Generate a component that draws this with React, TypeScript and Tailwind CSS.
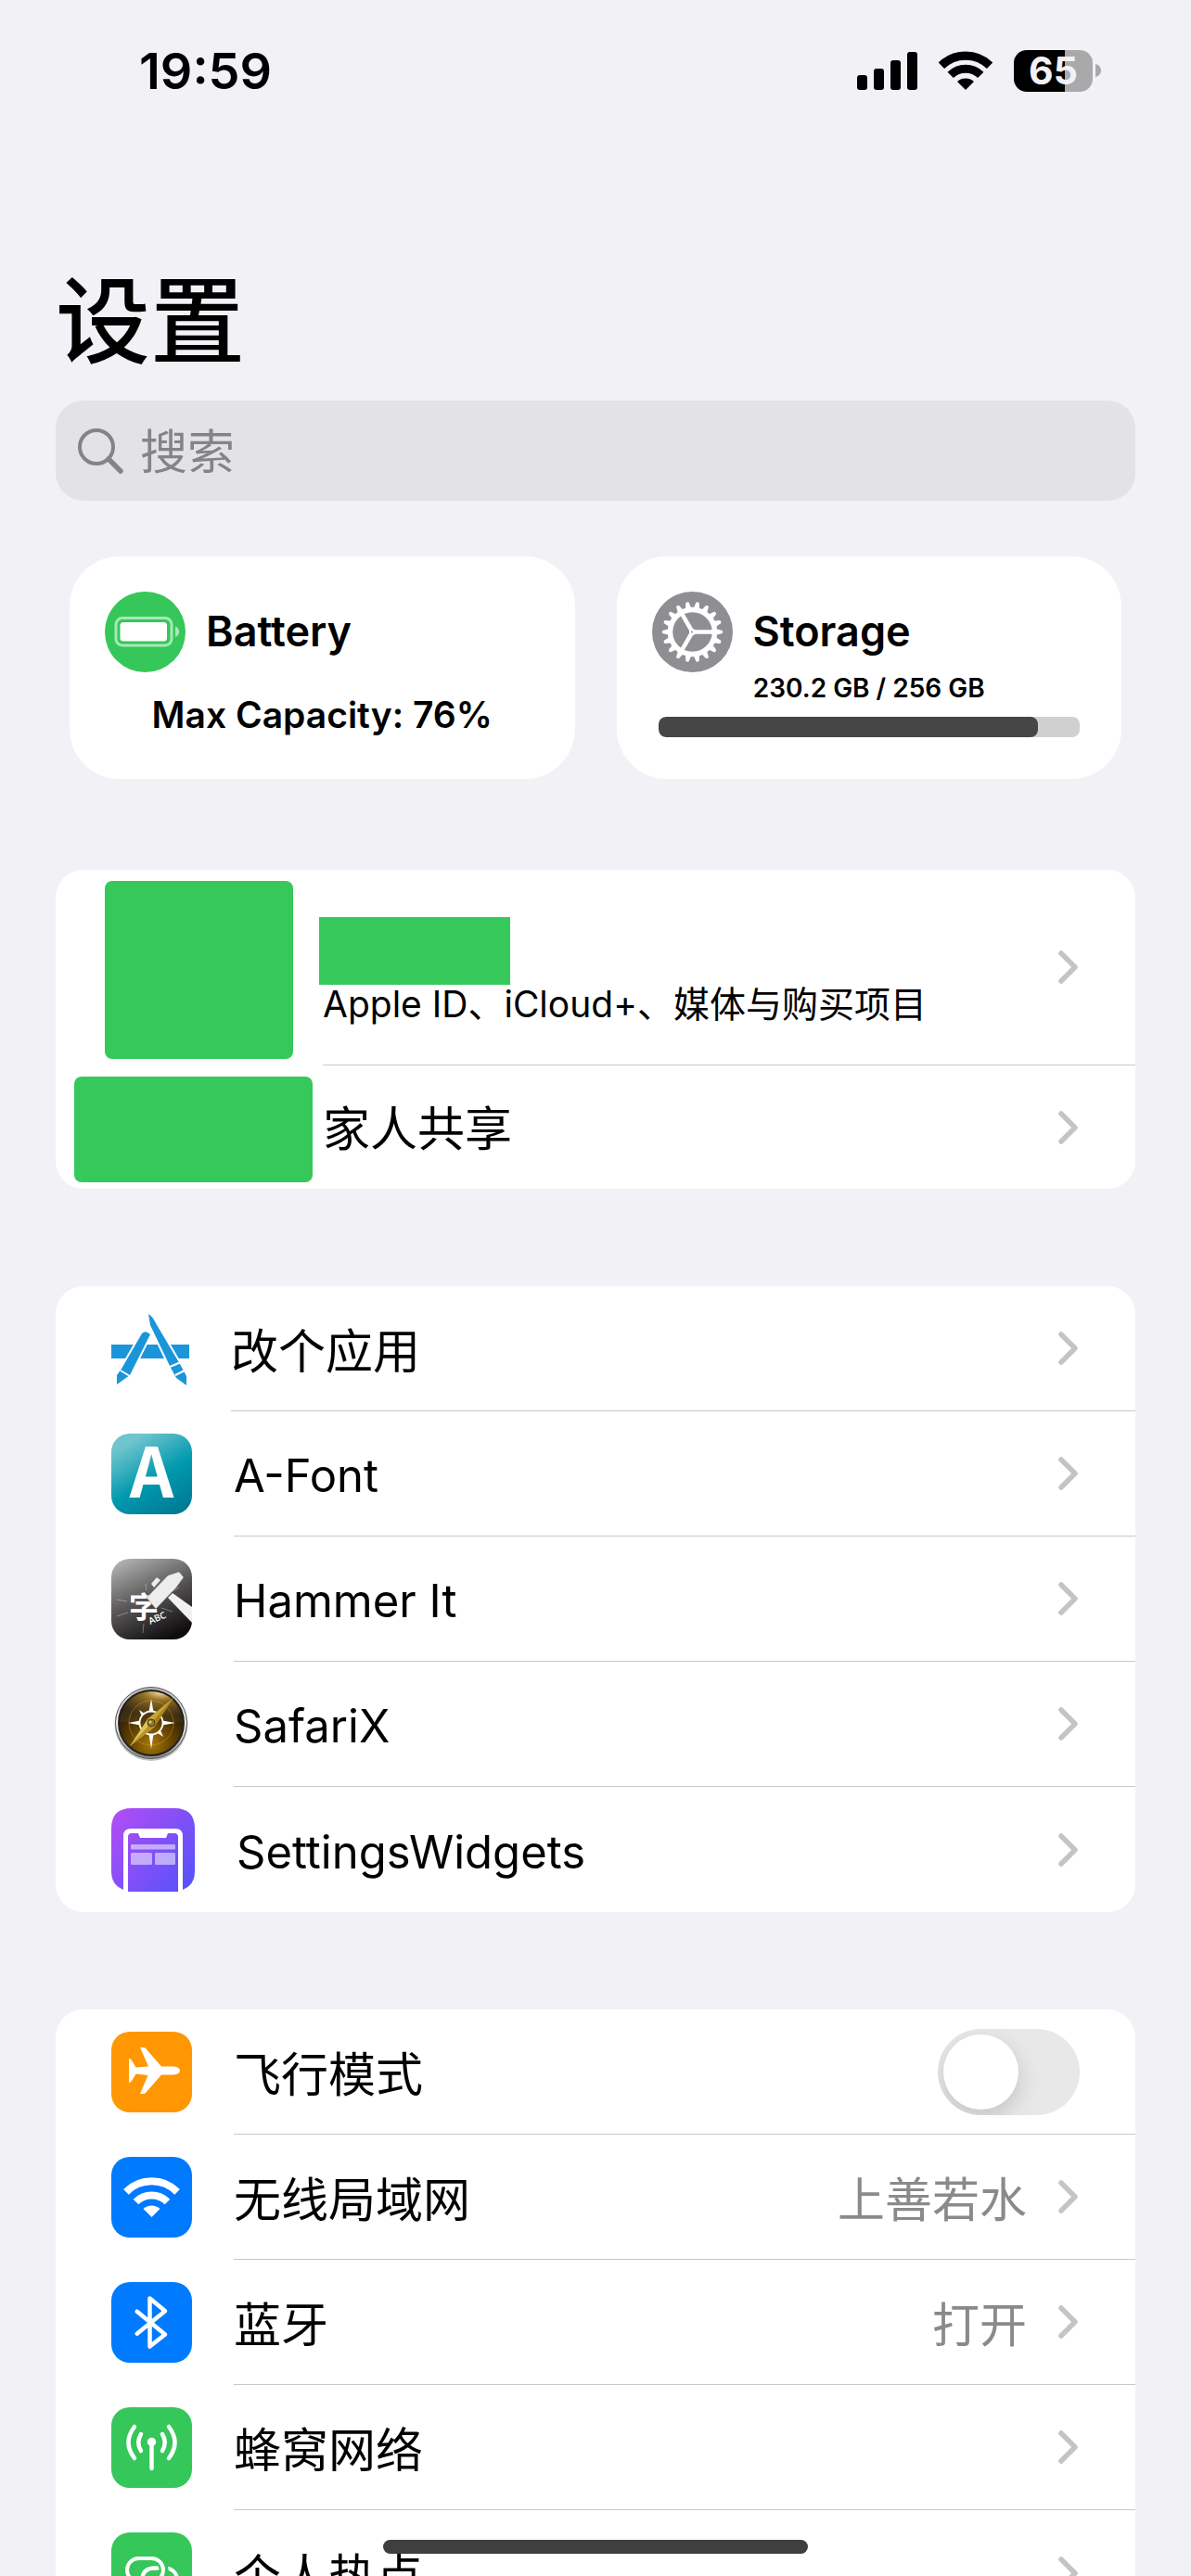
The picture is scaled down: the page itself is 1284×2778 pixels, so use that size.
import type { ReactNode } from "react";

const SANS = "font-['Inter','Noto_Sans_CJK_SC',sans-serif]";

function Chevron() {
  return (
    <svg className="h-9 w-[21px] shrink-0" viewBox="0 0 21 36" fill="none" aria-hidden="true">
      <path d="M3 3L18 18L3 33" stroke="#c4c4c6" strokeWidth="5.5" strokeLinecap="round" strokeLinejoin="round" />
    </svg>
  );
}

function StatusBar() {
  return (
    <div className="flex h-[152px] items-center justify-between pr-[97px] pl-[150px]">
      <span className="pt-0.5 text-[54px] leading-none font-semibold">19:59</span>
      <div className="flex items-center gap-[23px]">
        <svg className="h-[41px] w-[65px]" viewBox="0 0 65 41" aria-label="信号">
          <rect x="0" y="25" width="11" height="16" rx="3" />
          <rect x="18" y="18" width="11" height="23" rx="3" />
          <rect x="36" y="9" width="11" height="32" rx="3" />
          <rect x="54" y="0" width="11" height="41" rx="3" />
        </svg>
        <svg className="h-[42px] w-[58px]" viewBox="0 0 58 42" fill="none" aria-label="Wi-Fi">
          <path d="M2.9 15.8A37.3 37.3 0 0 1 55.1 15.8" stroke="#000" strokeWidth="9.2" />
          <path d="M12.7 25.9A23 23 0 0 1 45.3 25.9" stroke="#000" strokeWidth="9" />
          <path d="M29 42L20 33A13.5 13.5 0 0 1 38 33Z" fill="#000" />
        </svg>
        <div className="flex items-center gap-[3px]">
          <div className="flex h-[45px] w-[85px] items-center justify-center rounded-[14px] bg-[linear-gradient(90deg,#000_65%,#a9a9ab_65%)] text-[41px] leading-none font-bold text-[#f2f1f6]">
            65
          </div>
          <svg className="h-[14px] w-[6px]" viewBox="0 0 6 14" aria-hidden="true">
            <path d="M0 0C4 1 6 4 6 7S4 13 0 14Z" fill="#a9a9ab" />
          </svg>
        </div>
      </div>
    </div>
  );
}

function SearchBox() {
  return (
    <label className="flex h-[108px] items-center gap-[18px] rounded-[30px] bg-[#e3e2e7] px-6">
      <svg className="size-[49px] shrink-0" viewBox="0 0 49 49" fill="none" aria-label="搜索">
        <circle cx="20" cy="20" r="18" stroke="#838388" strokeWidth="4" />
        <path d="M33 33L46 46" stroke="#838388" strokeWidth="5.5" strokeLinecap="round" />
      </svg>
      <input
        type="search"
        placeholder="搜索"
        className="min-w-0 flex-1 bg-transparent pt-1 text-[51px] leading-[60px] outline-none placeholder:text-[#838388]"
      />
    </label>
  );
}

function BatteryIcon() {
  return (
    <svg className="size-[87px]" viewBox="0 0 87 87" aria-hidden="true">
      <circle cx="43.5" cy="43.5" r="43.5" fill="#35c759" />
      <rect x="12" y="28.5" width="60" height="29.5" rx="7" fill="none" stroke="#fff" strokeOpacity=".58" strokeWidth="3" />
      <rect x="16.5" y="33" width="50.5" height="20.5" rx="3.5" fill="#fff" />
      <path d="M76 37.5C79 38.5 80 41 80 43.3S79 48 76 49Z" fill="#fff" fillOpacity=".58" />
    </svg>
  );
}

const TEETH = Array.from({ length: 18 }, (_, i) => i * 20);

function GearIcon() {
  return (
    <svg className="size-[87px]" viewBox="0 0 87 87" aria-hidden="true">
      <circle cx="43.5" cy="43.5" r="43.5" fill="#8e8e93" />
      <g fill="#fff">
        {TEETH.map((a) => (
          <path key={a} d="M68 40L75.8 41.9Q76.6 43.5 75.8 45.1L68 47Z" transform={`rotate(${a} 43.5 43.5)`} />
        ))}
      </g>
      <g fill="none" stroke="#fff">
        <circle cx="43.5" cy="43.5" r="24" strokeWidth="5.5" />
        <path d="M43.5 43.5H67M43.5 43.5L31.7 23.1M43.5 43.5L31.7 63.9" strokeWidth="4.5" />
      </g>
      <circle cx="43.5" cy="43.5" r="3.5" fill="#fff" />
      <circle cx="43" cy="43.5" r="1" fill="#8e8e93" />
    </svg>
  );
}

function Widget({ icon, title, children }: { icon: ReactNode; title: string; children: ReactNode }) {
  return (
    <section className="h-60 min-w-0 flex-1 rounded-[54px] bg-white pt-[38px]">
      <div className="flex items-center gap-[22px] pl-[38px]">
        {icon}
        <h2 className="pb-0.5 text-[45px] leading-none font-semibold">{title}</h2>
      </div>
      {children}
    </section>
  );
}

function Tile({ bg, children }: { bg: string; children: ReactNode }) {
  return (
    <svg className={`size-[87px] shrink-0 rounded-[20px] ${bg}`} viewBox="0 0 87 87" fill="none" aria-hidden="true">
      {children}
    </svg>
  );
}

const appStoreIcon = (
  <svg className="h-[87px] w-[84px] shrink-0" viewBox="0 0 84 87" aria-hidden="true">
    <rect x="0" y="39" width="84" height="15" fill="#1b95da" />
    <g fill="#1b95da" stroke="#fff" strokeWidth="4" paintOrder="stroke">
      <path d="M33 27Q37 23 42 28L20 72L6 82V72L11 65Z" />
      <path d="M40 6Q44 8 48 16L74 60L81 73V83L70 75L63 62L42 18Z" />
    </g>
    <path d="M10 67L20 73M63 63L75 58M69 72L79 67" stroke="#fff" strokeWidth="2" />
  </svg>
);

const aFontIcon = (
  <Tile bg="bg-[linear-gradient(150deg,#70c4ce_15%,#0099ae_55%,#00748f)]">
    <text x="43.5" y="69" textAnchor="middle" fill="#fff" fontFamily="Noto Sans CJK SC" fontWeight="700" fontSize="74">
      A
    </text>
  </Tile>
);

const hammerIcon = (
  <Tile bg="bg-[linear-gradient(155deg,#bdbdbd,#5c5a5b_45%,#0d0b0c_90%)]">
    <g stroke="#fff" strokeOpacity=".35" strokeWidth="1">
      <path d="M6 44L17 46M6 62L18 58M35 70L34 80M37 27L38 34M54 53L66 57M64 36L73 31" />
    </g>
    <text x="19" y="64" fill="#fff" fontFamily="Noto Sans CJK SC" fontWeight="700" fontSize="32">
      字
    </text>
    <text x="42" y="71" fill="#fff" fontFamily="Open Sans" fontWeight="600" fontSize="10" transform="rotate(-24 42 71)">
      ABC
    </text>
    <path d="M61 42L66 37L87 52V69Z" fill="#f1f1f1" />
    <path d="M43 27L49 20L53 23L46 31Z" fill="#ededed" />
    <path d="M38 42L61 18L73 14L78 20L70 31L48 54Z" fill="#ededed" stroke="#777" strokeWidth=".5" />
  </Tile>
);

const safariIcon = (
  <svg className="size-[87px] shrink-0" viewBox="0 0 87 87" aria-hidden="true">
    <defs>
      <linearGradient id="rim" x1="0" y1="0" x2="0" y2="1">
        <stop offset="0" stopColor="#b8b8b8" />
        <stop offset=".5" stopColor="#f5f5f5" />
        <stop offset="1" stopColor="#8a8a8a" />
      </linearGradient>
      <radialGradient id="face" cx=".5" cy=".82" r=".7">
        <stop offset="0" stopColor="#a87806" />
        <stop offset=".5" stopColor="#5f3f00" />
        <stop offset="1" stopColor="#1d1304" />
      </radialGradient>
      <radialGradient id="shine" cx=".65" cy="0" r=".8">
        <stop offset="0" stopColor="#fff2b8" />
        <stop offset=".35" stopColor="#b5892c" stopOpacity=".8" />
        <stop offset="1" stopColor="#4a3c20" stopOpacity=".5" />
      </radialGradient>
    </defs>
    <circle cx="43" cy="43.5" r="39.5" fill="#777" fillOpacity=".45" />
    <circle cx="43" cy="42" r="38.5" fill="url(#rim)" stroke="#555" strokeWidth="1" />
    <circle cx="43" cy="42" r="35" fill="url(#face)" stroke="#222" strokeWidth="2" />
    <path d="M9 42A34 34 0 0 1 77 42Q43 34 9 42Z" fill="url(#shine)" />
    <circle cx="43" cy="42" r="24" fill="none" stroke="#d9a832" strokeOpacity=".4" />
    <circle cx="43" cy="42" r="12.5" fill="none" stroke="#fff" strokeWidth="1.8" />
    <g fill="#fff">
      <path d="M43 16L45.5 30H40.5ZM43 70L45.5 54H40.5ZM18 42L31 39.5V44.5ZM69 42L55 39.5V44.5Z" />
      <path d="M30 28L36 32L33 35ZM56 57L50 53L53 50ZM30 57L36 53L33 50Z" />
    </g>
    <path d="M67 15L47 46L39 38Z" fill="#a98418" />
    <path d="M20 67L39 38L47 46Z" fill="#dfc45a" />
    <path d="M67 15L43 42L39 38Z" fill="#c9a53c" />
    <path d="M20 67L43 42L47 46Z" fill="#b8952c" />
    <circle cx="43" cy="42" r="4" fill="#8c762c" stroke="#4c3c10" />
    <circle cx="42" cy="41" r="1.5" fill="#d8cc90" />
  </svg>
);

const widgetsIcon = (
  <svg className="size-[90px] shrink-0" viewBox="0 0 90 90" aria-hidden="true">
    <defs>
      <linearGradient id="violet" gradientUnits="userSpaceOnUse" x1="0" y1="9" x2="90" y2="81">
        <stop offset="0" stopColor="#b04df5" />
        <stop offset="1" stopColor="#5652fb" />
      </linearGradient>
    </defs>
    <path d="M22 0H68Q90 0 90 22V68Q90 83 77 88V30Q77 22 69 22H21Q13 22 13 30V88Q0 83 0 68V22Q0 0 22 0Z" fill="url(#violet)" />
    <path d="M18 90V31Q18 27 22 27H29L31 32H59L61 27H68Q72 27 72 31V90Z" fill="url(#violet)" />
    <g fill="#fff" fillOpacity=".52">
      <rect x="21" y="39" width="48" height="5.5" rx="1" />
      <rect x="21" y="48" width="23" height="13" rx="1.5" />
      <rect x="47" y="48" width="22" height="13" rx="1.5" />
    </g>
  </svg>
);

const planeIcon = (
  <Tile bg="bg-[#ff9702]">
    <path
      d="M74 42C74 44.5 71 46.5 65 46.5H54L37 66Q36 67 34.5 67H31L39.5 47L26.5 45.5L22 53Q21 55 19 55V29Q21 29 22 31L26.5 38.5L40 37.5L31 17H34.5Q36 17 37 18L54 37.5H65C71 37.5 74 39.5 74 42Z"
      fill="#fff"
    />
  </Tile>
);

const wifiIcon = (
  <Tile bg="bg-[#007aff]">
    <path d="M15.9 37.8A39 39 0 0 1 71.1 37.8M26.5 48.5A24 24 0 0 1 60.5 48.5" stroke="#fff" strokeWidth="8" />
    <path d="M43.5 65L34.5 56A13 13 0 0 1 52.5 56Z" fill="#fff" />
  </Tile>
);

const bluetoothIcon = (
  <Tile bg="bg-[#007aff]">
    <path
      d="M27.7 31.7L58 56.5L41.5 69.5V17.5L58 31.3L27.7 55.7"
      stroke="#fff"
      strokeWidth="4.5"
      strokeLinecap="round"
      strokeLinejoin="round"
    />
  </Tile>
);

const cellularIcon = (
  <Tile bg="bg-[#35c759]">
    <circle cx="43.5" cy="37.5" r="4.7" fill="#fff" />
    <path
      d="M43.5 38V66M32 29Q26.5 38 32 47M55 29Q60.5 38 55 47M25 21Q12 38 25 55M62 21Q75 38 62 55"
      stroke="#fff"
      strokeWidth="4.5"
      strokeLinecap="round"
    />
  </Tile>
);

const hotspotIcon = (
  <Tile bg="bg-[#35c759]">
    <rect x="33" y="38.5" width="38" height="25" rx="12.5" stroke="#fff" strokeWidth="4" />
    <path d="M45 28H44Q56.5 28 56.5 40.5T44 53" stroke="#35c759" strokeWidth="10" />
    <rect x="17" y="28" width="39" height="25" rx="12.5" stroke="#fff" strokeWidth="4" />
    <path d="M49 38.5H45Q36 39 34 46" stroke="#fff" strokeWidth="4" strokeLinecap="round" />
  </Tile>
);

type RowProps = { icon: ReactNode; label: string; latin?: boolean; value?: string };

function Row({ icon, label, latin, value }: RowProps) {
  return (
    <li className="group">
      <a href="#" className="flex h-[135px] items-center gap-[45px] pl-[60px]">
        {icon}
        <span className="flex h-full min-w-0 flex-1 items-center border-b border-[#c8c8ca] pr-[62px] group-last:border-0">
          <span className={latin ? "flex-1 pt-1.5 text-[49px] leading-[60px]" : "flex-1 pt-2 text-[51px] leading-[60px]"}>
            {label}
          </span>
          {value && <span className="pt-2 pr-[34px] text-[51px] leading-[60px] text-[#8a8a8d]">{value}</span>}
          <Chevron />
        </span>
      </a>
    </li>
  );
}

function AirplaneRow() {
  return (
    <li>
      <label className="flex h-[135px] items-center gap-[45px] pl-[60px]">
        {planeIcon}
        <span className="flex h-full min-w-0 flex-1 items-center justify-between border-b border-[#c8c8ca] pr-[60px]">
          <span className="pt-2 text-[51px] leading-[60px]">飞行模式</span>
          <input
            type="checkbox"
            role="switch"
            className="flex h-[93px] w-[153px] appearance-none items-center overflow-hidden rounded-full bg-[#e8e8e9] px-[6px] before:size-[81px] before:rounded-full before:bg-white before:shadow-[0_9px_24px_rgba(0,0,0,0.16)] checked:justify-end checked:bg-[#35c759]"
          />
        </span>
      </label>
    </li>
  );
}

function Group({ children }: { children: ReactNode }) {
  return <ul className="overflow-hidden rounded-[30px] bg-white">{children}</ul>;
}

export default function App() {
  return (
    <div className={`relative h-screen overflow-hidden bg-[#f2f1f6] text-black ${SANS}`}>
      <StatusBar />
      <main className="px-[60px] pt-[135px]">
        <h1 className="mb-[25px] text-[102px] leading-[120px] font-medium">设置</h1>
        <SearchBox />

        <div className="mt-[60px] flex gap-[45px] px-[15px]">
          <Widget icon={<BatteryIcon />} title="Battery">
            <p className="mt-[22px] text-center text-[39px] leading-[48px] font-semibold">Max Capacity: 76%</p>
          </Widget>
          <Widget icon={<GearIcon />} title="Storage">
            <p className="text-center text-[28px] leading-[34px] font-semibold">230.2 GB / 256 GB</p>
            <div className="mx-[45px] mt-[14px] h-[22px] overflow-hidden rounded-lg bg-[#d0d0d0]">
              <div className="h-full w-[90%] rounded-lg bg-[#464646]" />
            </div>
          </Widget>
        </div>

        <div className="mt-[98px] flex flex-col gap-[105px]">
          <Group>
            <li>
              <a href="#" className="flex h-[211px] pl-[53px]">
                <span className="mt-3 h-48 w-[203px] shrink-0 rounded-lg bg-[#37c85b]" />
                <span className="ml-8 flex min-w-0 flex-1 items-center border-b border-[#c8c8ca] pr-[62px]">
                  <span className="flex h-full flex-1 flex-col pt-[51px]">
                    <span className="-ml-1 h-[73px] w-[206px] bg-[#37c85b]" />
                    <span className="text-[39px] leading-[42px]">Apple ID、iCloud+、媒体与购买项目</span>
                  </span>
                  <Chevron />
                </span>
              </a>
            </li>
            <li>
              <a href="#" className="flex h-[133px] items-center gap-[11px] pr-[62px] pl-5">
                <span className="mt-1 h-[114px] w-[257px] shrink-0 rounded-lg bg-[#37c85b]" />
                <span className="flex-1 pt-1 text-[51px] leading-[60px]">家人共享</span>
                <Chevron />
              </a>
            </li>
          </Group>

          <Group>
            <Row icon={appStoreIcon} label="改个应用" />
            <Row icon={aFontIcon} label="A-Font" latin />
            <Row icon={hammerIcon} label="Hammer It" latin />
            <Row icon={safariIcon} label="SafariX" latin />
            <Row icon={widgetsIcon} label="SettingsWidgets" latin />
          </Group>

          <Group>
            <AirplaneRow />
            <Row icon={wifiIcon} label="无线局域网" value="上善若水" />
            <Row icon={bluetoothIcon} label="蓝牙" value="打开" />
            <Row icon={cellularIcon} label="蜂窝网络" />
            <Row icon={hotspotIcon} label="个人热点" />
          </Group>
        </div>
      </main>
      <div className="absolute bottom-6 left-1/2 h-[15px] w-[458px] -translate-x-1/2 rounded-full bg-[#3f3f3f]" />
    </div>
  );
}
